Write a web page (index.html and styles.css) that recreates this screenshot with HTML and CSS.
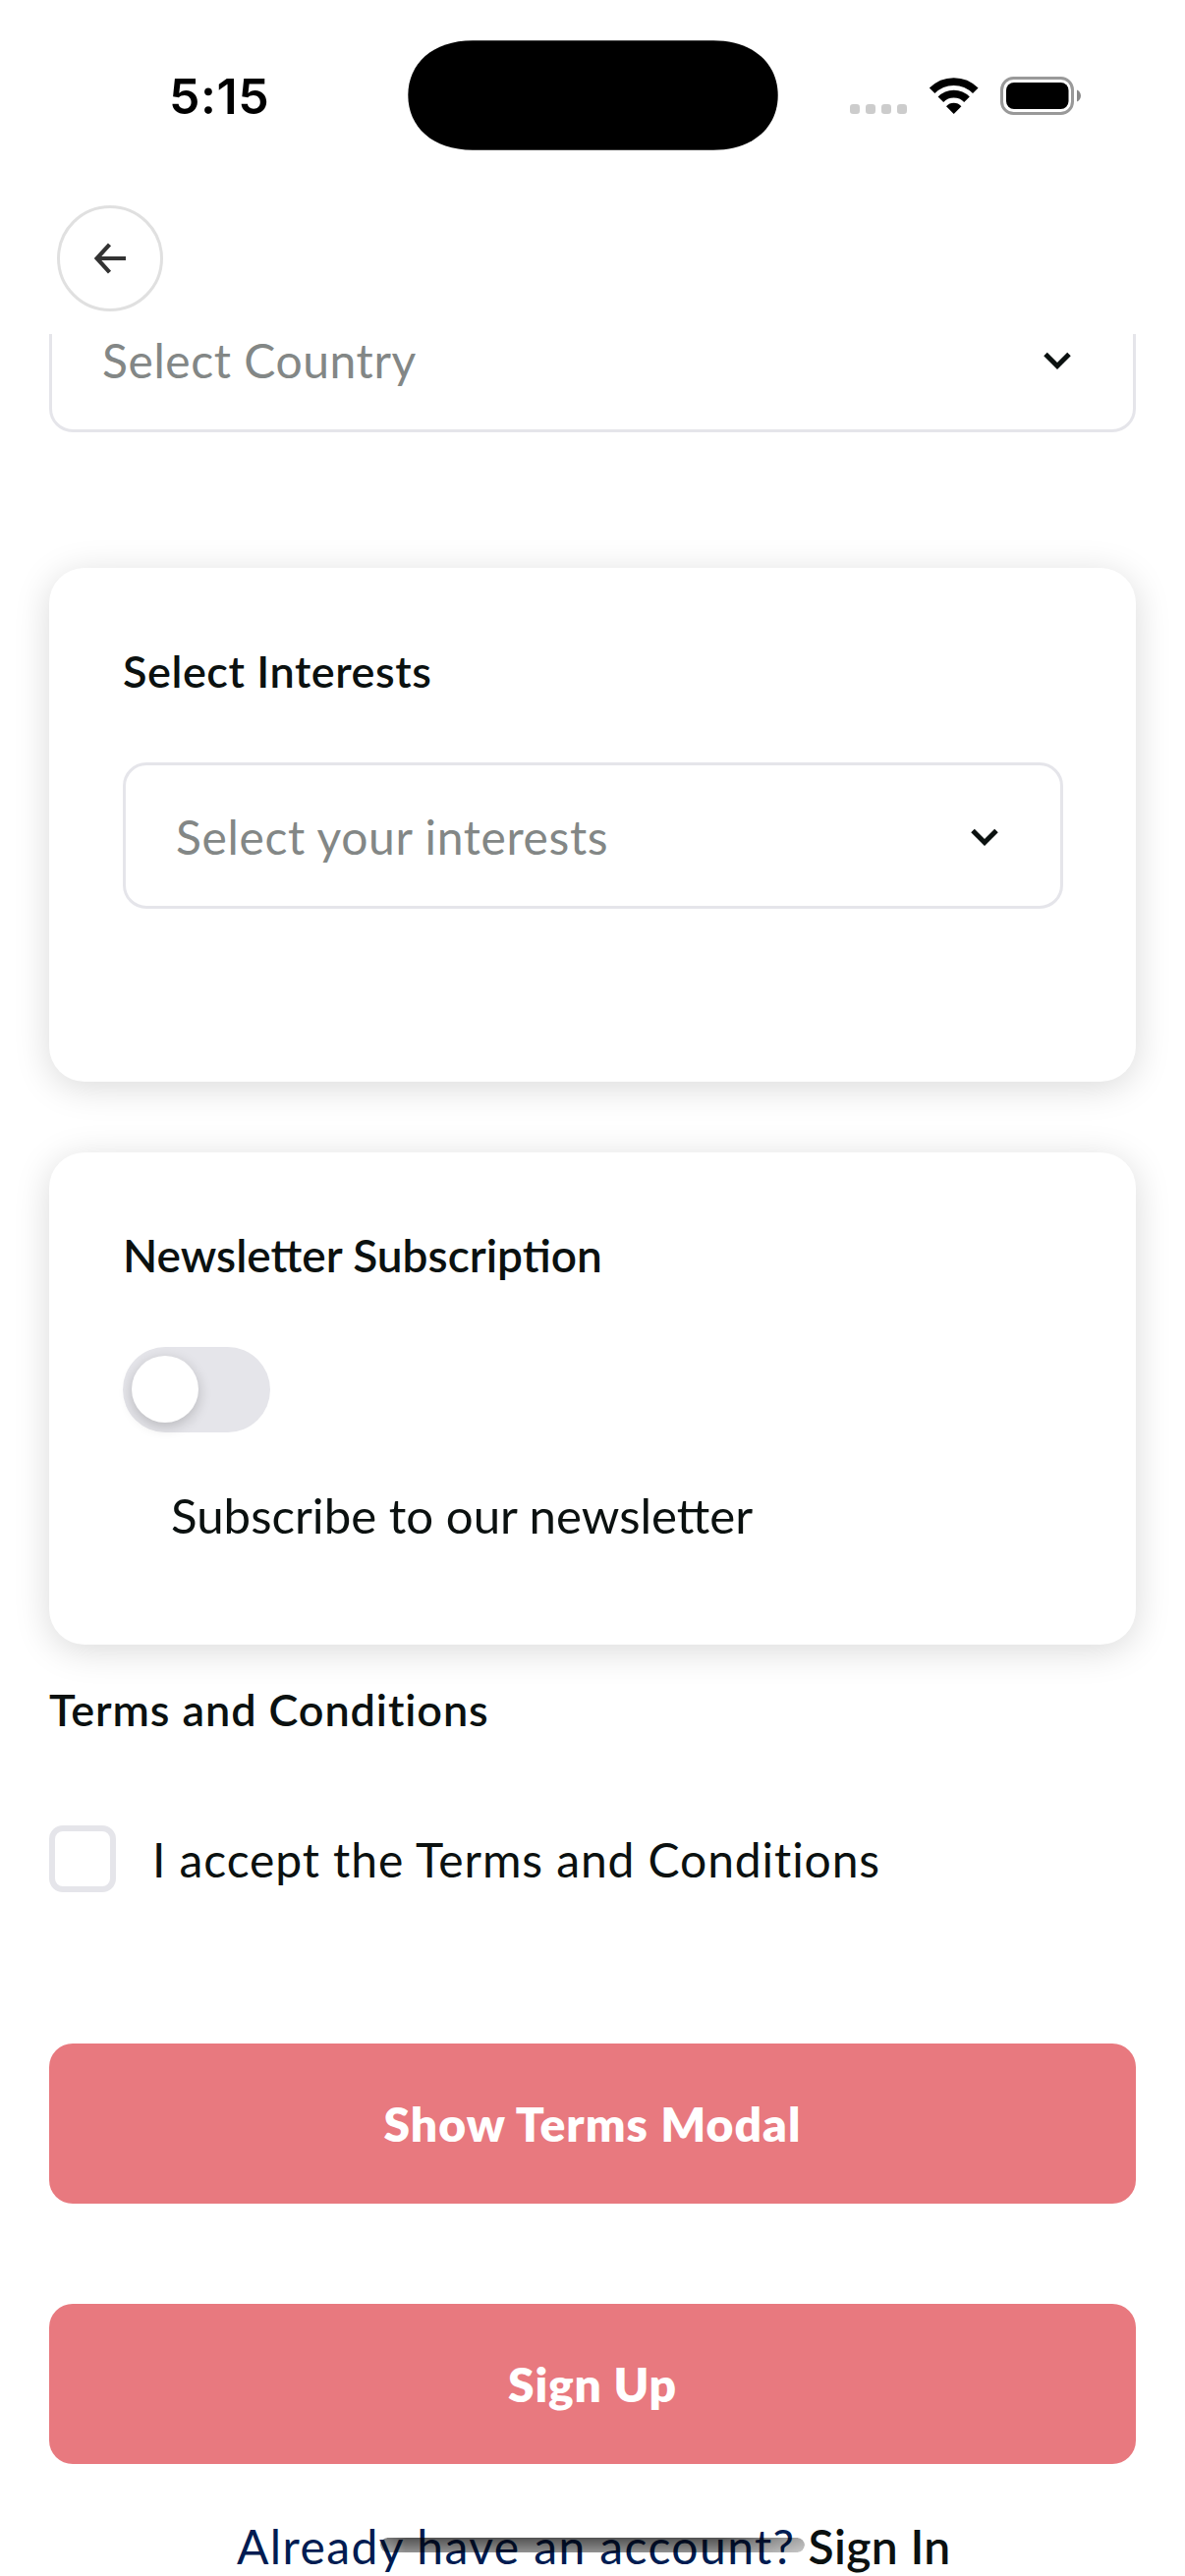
FILE: index.html
```html
<!DOCTYPE html>
<html lang="en">
<head>
<meta charset="utf-8">
<title>Sign Up</title>
<link rel="stylesheet" href="styles.css">
</head>
<body>
<div class="screen">
  <header class="status">
    <div class="time">5:15</div>
    <svg class="island" width="377" height="112" viewBox="0 0 377 112"><path d="M66 0.3H311C352 0.3 376.7 24 376.7 56S352 111.7 311 111.7H66C25 111.7 0.3 88 0.3 56S25 0.3 66 0.3Z"/></svg>
    <div class="indicators">
      <svg class="cell" width="58" height="10" viewBox="0 0 58 10" fill="#ccc"><rect x="0" y="0" width="10" height="10" rx="3.2"/><rect x="16" y="0" width="10" height="10" rx="3.2"/><rect x="32" y="0" width="10" height="10" rx="3.2"/><rect x="48" y="0" width="10" height="10" rx="3.2"/></svg>
      <svg class="wifi" width="52" height="39" viewBox="0 0 52 39"><path d="M3.600 14.300A31 31 0 0 1 47.800 14.300M12.400 23.200A18.500 18.500 0 0 1 39 23.200" fill="none" stroke="#000" stroke-width="7.800"/><path d="M25.700 38L18 30.200A10.500 10.500 0 0 1 33.400 30.200Z"/></svg>
      <svg class="battery" width="83" height="39" viewBox="0 0 83 39"><rect x="1.500" y="1.500" width="72" height="36" rx="12" fill="none" stroke="#999" stroke-width="3"/><rect x="6" y="6" width="63.500" height="27" rx="8"/><path d="M78 13.500C83.300 15.500 83.300 23.500 78 25.500Z" fill="#888"/></svg>
    </div>
  </header>
  <nav class="nav">
    <button class="back" aria-label="Back"><svg width="36" height="36" viewBox="0 0 36 36"><path d="M34 18H5M17.500 3.800L4.600 18L17.500 32.200" fill="none" stroke="#333" stroke-width="4.200"/></svg></button>
  </nav>
  <main class="form">
    <div class="clip">
      <div class="select"><span class="t country">Select Country</span><svg class="chev" width="28" height="19" viewBox="0 0 28 19"><path d="M2 2.500L14 14.500L26 2.500"/></svg></div>
    </div>
    <section class="card interests">
      <h2 class="t h-interests">Select Interests</h2>
      <div class="select"><span class="t your">Select your interests</span><svg class="chev" width="28" height="19" viewBox="0 0 28 19"><path d="M2 2.500L14 14.500L26 2.500"/></svg></div>
    </section>
    <section class="card newsletter">
      <h2 class="t h-news">Newsletter Subscription</h2>
      <div class="toggle"><span class="knob"></span></div>
      <p class="t subscribe">Subscribe to our newsletter</p>
    </section>
    <h2 class="t h-terms">Terms and Conditions</h2>
    <label class="accept"><span class="box"></span><span class="t accept-text">I accept the Terms and Conditions</span></label>
    <button class="btn"><span class="t show">Show Terms Modal</span></button>
    <button class="btn second"><span class="t signup">Sign Up</span></button>
    <p class="footer"><span class="t already">Already have an account?</span><span class="t signin">Sign In</span></p>
  </main>
  <div class="home"></div>
</div>
</body>
</html>
```
FILE: styles.css
```css
* { box-sizing: border-box; }
body { margin: 0; background: #fff; color: #0b1110; font-family: Lato, "Noto Sans", sans-serif; font-size: 48px; }
h2, p { margin: 0; }
button { border: 0; padding: 0; font: inherit; }
svg { display: block; flex: none; }
.screen { position: relative; width: 1206px; height: 2622px; overflow: hidden; display: flex; flex-direction: column; }
.t { white-space: nowrap; line-height: 60px; }

.status { height: 210px; display: grid; grid-template-columns: 415px 377px 1fr; }
.time { padding: 68px 0 0 172px; font: 600 50px/60px Inter, sans-serif; letter-spacing: .6px; color: #000; }
.island { margin-top: 41px; }
.indicators { display: flex; align-items: flex-start; padding: 78px 0 0 73px; }
.cell { margin-top: 28px; }
.wifi { margin-left: 22px; }
.battery { margin-left: 21px; }

.nav { height: 131px; padding-left: 58px; }
.back { width: 108px; height: 108px; border: 3px solid #e0e0e0; border-radius: 50%; background: #fff; display: flex; align-items: center; justify-content: center; }

.form { padding: 0 50px; display: flex; flex-direction: column; }
.clip { height: 238px; overflow: hidden; }
.clip .select { margin-top: -49px; }
.select { height: 149px; border: 3px solid #e5e5ea; border-radius: 24px; display: flex; align-items: center; justify-content: space-between; padding: 3px 63px 0 51px; color: #838786; }
.country { letter-spacing: .57px; line-height: 48px; }
.your { letter-spacing: .63px; }
.chev { fill: none; stroke: #0b1110; stroke-width: 5; }

.card { background: #fff; border-radius: 36px; box-shadow: 0 6px 36px rgba(0, 0, 0, .15); padding: 75px 74px 0 75px; }
.interests { height: 523px; }
.interests .select { margin-top: 63px; }
.newsletter { height: 501px; margin-top: 72px; }
h2 { font-size: 45px; font-weight: 600; }
.h-interests { letter-spacing: .55px; }
.h-news { font-size: 46px; }
.toggle { width: 150px; height: 87px; margin-top: 63px; padding: 9px; border-radius: 44px; background: #e5e5ea; }
.knob { display: block; width: 68px; height: 68px; border-radius: 50%; background: #fff; box-shadow: 0 4px 14px rgba(0, 0, 0, .2); }
.subscribe { margin: 54px 0 0 49px; font-size: 49.2px; }
.h-terms { margin-top: 36px; letter-spacing: .9px; }
.accept { display: flex; margin-top: 88px; height: 68px; }
.box { width: 68px; height: 68px; border: 6px solid #e5e5ea; border-radius: 14px; }
.accept-text { margin: 5px 0 0 37px; letter-spacing: .9px; }
.btn { height: 163px; margin-top: 154px; border-radius: 24px; background: #e8797f; color: #fff; font-weight: 800; display: flex; justify-content: center; align-items: center; }
.show { letter-spacing: 1.05px; }
.signup { letter-spacing: .8px; }
.second { margin-top: 102px; }
.footer { display: flex; gap: 13px; margin: 54px 0 0 191px; }
.already { color: #001c52; letter-spacing: 1.4px; }
.signin { font-weight: 600; letter-spacing: .4px; }
.home { position: absolute; left: 387px; top: 2583px; width: 432px; height: 15px; border-radius: 8px; background: linear-gradient(rgba(0, 0, 0, .68), rgba(0, 0, 0, .43)); mask-image: linear-gradient(90deg, rgba(0, 0, 0, .7), #000 6%, #000 80%, rgba(0, 0, 0, .5)); }
```
